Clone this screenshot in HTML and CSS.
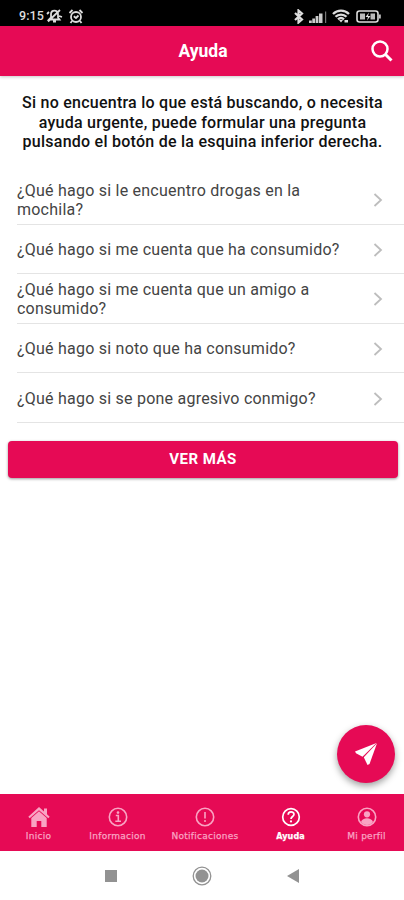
FILE: index.html
```html
<!DOCTYPE html>
<html lang="es">
<head>
<meta charset="utf-8">
<title>Ayuda</title>
<link rel="stylesheet" href="styles.css">
</head>
<body>
<div class="screen">
  <div class="status">
    <span class="time">9:15</span>
    <svg class="mute" width="17" height="14" viewBox="0 0 17 14" fill="none" stroke="#ddd" stroke-width="1.800"><path d="M3 10.500h10.500l-1.500-2V5c0-4.500-7-4.500-7 0v3.500zM7 12.500h3M2 12.500 14 1M1 5l2-2M13 7l3 1"/></svg>
    <svg class="alarm" width="16" height="15" viewBox="0 0 16 15" fill="none" stroke="#ddd" stroke-width="1.800"><circle cx="8" cy="8" r="5"/><path d="M1.500 4l3-3M11.500 1l3 3M5.800 7.200 8 9l2.500-2.500M4 12l-1.500 2M12 12l1.500 2"/></svg>
    <span class="gap"></span>
    <svg class="bt" width="10" height="15" viewBox="0 0 10 15" fill="none" stroke="#ddd" stroke-width="2.200"><path d="M1 4l7 6.500-3.500 3v-12L8 4.500 1 11"/></svg>
    <svg class="signal" width="18" height="13" viewBox="0 0 18 13" fill="#ccc"><path d="M0 10.500h2.800v2.500H0zM3.300 8.500H6V13H3.300zM6.600 6h2.800v7H6.600zM10 3.500h3.500V13H10z"/><path fill="#777" d="M16 1.500h1.200V13H16z"/></svg>
    <svg class="wifi" width="18" height="14" viewBox="0 0 18 14" fill="none" stroke="#ddd" stroke-width="2.300"><path d="M1 5c4.500-4.500 11.500-4.500 16 0M3.500 7.800c3-3 8-3 11 0M6 10.300c2-1.800 4-1.800 6 0"/><path fill="#ddd" stroke="none" d="M7 11h4l-2 2.500zM12.500 11H16v2.500h-3.500z"/></svg>
    <svg class="battery" width="25" height="13" viewBox="0 0 25 13" fill="none" stroke="#ddd" stroke-width="1.600"><rect x="1" y="1" width="21" height="11" rx="2.500"/><path d="M23.900 4.500v4"/><path fill="#bbb" stroke="none" d="M4 3.500h5v6H4zM14.500 3.500H19v6h-4.500z"/><path fill="#ddd" stroke="none" d="M13 2.500 9.500 7H12l-1 3.500L14.500 6H12z"/></svg>
  </div>
  <header class="header">
    <h1>Ayuda</h1>
    <svg class="search" width="24" height="24" viewBox="0 0 24 24" fill="none" stroke="#fff" stroke-width="2.500"><circle cx="10" cy="10" r="7.500"/><path stroke-width="3" d="m15 15 6.500 6.500"/></svg>
  </header>
  <main class="content">
    <p class="intro">Si no encuentra lo que está buscando, o necesita<br>ayuda urgente, puede formular una pregunta<br>pulsando el botón de la esquina inferior derecha.</p>
    <ul class="list">
      <li><span>¿Qué hago si le encuentro drogas en la<br>mochila?</span><svg width="10" height="14" viewBox="0 0 10 14"><path d="m1.500 1 6.500 6-6.500 6"/></svg></li>
      <li><span>¿Qué hago si me cuenta que ha consumido?</span><svg width="10" height="14" viewBox="0 0 10 14"><path d="m1.500 1 6.500 6-6.500 6"/></svg></li>
      <li><span>¿Qué hago si me cuenta que un amigo a<br>consumido?</span><svg width="10" height="14" viewBox="0 0 10 14"><path d="m1.500 1 6.500 6-6.500 6"/></svg></li>
      <li><span>¿Qué hago si noto que ha consumido?</span><svg width="10" height="14" viewBox="0 0 10 14"><path d="m1.500 1 6.500 6-6.500 6"/></svg></li>
      <li><span>¿Qué hago si se pone agresivo conmigo?</span><svg width="10" height="14" viewBox="0 0 10 14"><path d="m1.500 1 6.500 6-6.500 6"/></svg></li>
    </ul>
    <button class="more">VER MÁS</button>
    <button class="fab" aria-label="Enviar"><svg width="24" height="24" viewBox="0 0 24 24" fill="#fff"><path d="M22.500 1 1 9.500l1 1.800 6.500 3.500z"/><path d="M23 1.200 9.800 15.200 13.500 23l2-1z"/></svg></button>
  </main>
  <nav class="tabs">
    <a class="tab"><svg width="22" height="20" viewBox="0 0 22 20" fill="currentColor"><path d="M11 0 .3 9.800l1.400 1.500L11 3.200l9.300 8.100 1.400-1.500-2.700-2.500V1.500h-3v3z"/><path d="M3.300 11 11 4.200l7.700 6.800v9h-5.400v-6H8.700v6H3.300z"/></svg><span>Inicio</span></a>
    <a class="tab"><svg width="20" height="20" viewBox="0 0 20 20" fill="none" stroke="currentColor" stroke-width="1.600"><circle cx="10" cy="10" r="8.700"/><path d="M7.800 8.500h2.500v5.500M7.300 14.200H13"/><circle cx="10" cy="5.600" r="1.300" fill="currentColor" stroke="none"/></svg><span>Informacion</span></a>
    <a class="tab"><svg width="20" height="20" viewBox="0 0 20 20" fill="none" stroke="currentColor" stroke-width="1.600"><circle cx="10" cy="10" r="8.700"/><path d="M10 5v6.500"/><circle cx="10" cy="14" r="1" fill="currentColor" stroke="none"/></svg><span>Notificaciones</span></a>
    <a class="tab active"><svg width="20" height="20" viewBox="0 0 20 20" fill="none" stroke="currentColor" stroke-width="1.700"><circle cx="10" cy="10" r="8.300"/><path d="M7.200 7.800c0-4 5.800-3.500 5.800-.5 0 2.200-3 2.200-3 4.700"/><circle cx="10" cy="14.400" r="1.100" fill="currentColor" stroke="none"/></svg><span>Ayuda</span></a>
    <a class="tab"><svg width="20" height="20" viewBox="0 0 20 20" fill="currentColor"><circle cx="10" cy="10" r="8.700" fill="none" stroke="currentColor" stroke-width="1.600"/><circle cx="10" cy="7.300" r="3.100"/><path d="M4 15c1.500-5 10.500-5 12 0-3 4-9 4-12 0z"/></svg><span>Mi perfil</span></a>
  </nav>
  <div class="system">
    <svg width="12" height="12" viewBox="0 0 12 12"><path fill="#929292" d="M0 0h12v12H0z"/></svg>
    <svg width="20" height="20" viewBox="0 0 20 20"><circle cx="10" cy="10" r="8.800" fill="none" stroke="#929292" stroke-width="1.300"/><circle cx="10" cy="10" r="6.500" fill="#929292"/></svg>
    <svg width="12" height="14" viewBox="0 0 12 14"><path fill="#929292" d="M12 0v14L0 7z"/></svg>
  </div>
</div>
</body>
</html>
```
FILE: styles.css
```css
* { box-sizing: border-box; }
body { margin: 0; background: #fff; font-family: Roboto, sans-serif; }
.screen { width: 404px; height: 900px; display: flex; flex-direction: column; overflow: hidden; }

.status { height: 26px; flex: none; background: #000; color: #ddd; display: flex; align-items: center; padding: 6px 23px 0 19px; }
.time { font-size: 12.5px; font-weight: 500; width: 27px; line-height: 14px; letter-spacing: .1px; }
.alarm { margin-left: 5px; }
.gap { flex: 1; }
.bt { margin-right: 1px; }
.signal { margin-left: 4px; }
.wifi { margin-left: 5px; }
.battery { margin-left: 6px; }

.header { height: 50px; flex: none; background: #e60a55; color: #fff; display: grid; grid-template-columns: 34px 1fr 34px; align-items: center; box-shadow: 0 1px 3px rgba(0, 0, 0, .22); }
.header h1 { grid-column: 2; margin: 0; font-size: 17.5px; line-height: 22px; font-weight: 700; text-align: center; padding-left: 2px; }

.content { flex: 1; position: relative; }
.intro { margin: 17px 0 0; height: 60px; text-align: center; font-size: 16px; line-height: 19.600px; font-weight: 500; letter-spacing: .25px; color: #111; white-space: nowrap; padding-left: 1px; }
.list { list-style: none; margin: 22px 0 0; padding: 0 0 0 17px; }
.list li { height: 49.600px; display: flex; align-items: center; justify-content: space-between; padding: 2px 21px 0 0; border-bottom: 1.500px solid #e4e4e4; font-size: 16px; line-height: 19.600px; letter-spacing: .23px; color: #444; white-space: nowrap; }
.list path { fill: none; stroke: #bdbdbd; stroke-width: 1.800; }
.more { display: block; margin: 18px 6px 0 8px; width: 390px; height: 37px; padding: 0; border: 0; border-radius: 4px; background: #e60a55; color: #fff; font: 700 15px/37px Roboto, sans-serif; letter-spacing: .5px; box-shadow: 0 1px 3px rgba(0, 0, 0, .4); }
.fab { position: absolute; right: 9px; bottom: 11px; width: 58px; height: 58px; padding: 0; border: 0; border-radius: 50%; background: #e60a55; display: flex; align-items: center; justify-content: center; box-shadow: 0 3px 7px rgba(0, 0, 0, .38); }

.tabs { height: 57px; flex: none; background: #e60a55; color: #f9a4c3; display: grid; grid-template-columns: 77px 81px 94px 77px 75px; }
.tab { display: flex; flex-direction: column; align-items: center; padding-top: 13px; }
.tab span { font: 9px/12px "DejaVu Sans", sans-serif; margin-top: 3px; white-space: nowrap; letter-spacing: .25px; -webkit-text-stroke: .25px currentColor; }
.tab.active { color: #fff; }
.tab.active span { font-weight: 700; font-size: 8px; line-height: 13px; letter-spacing: .1px; }

.system { height: 49px; flex: none; display: flex; align-items: center; justify-content: center; gap: 75px; background: #fff; padding: 1px 1px 0 0; }
```
